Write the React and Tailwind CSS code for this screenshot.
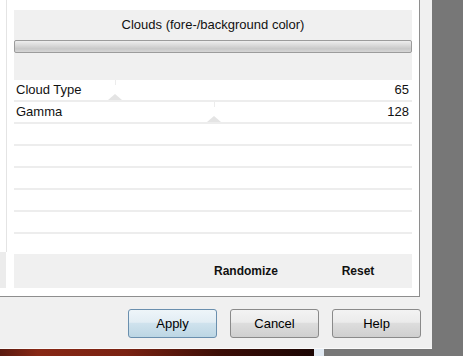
import React from "react"

const params = [
  { label: "Cloud Type", value: 65 },
  { label: "Gamma", value: 128 },
]

const font = { fontFamily: '"Liberation Sans", Arial, sans-serif' }

const ParamRow = ({ label, value }) => {
  const pct = (value / 255) * 100
  return (
    <div className="relative h-[22px] border-b-2 border-[#ededed] flex items-center justify-between pl-[2px] pr-[3px] text-[13px] text-[#111]">
      <span>{label}</span>
      <span>{value}</span>
      {/* slider marker */}
      <div className="absolute top-0 w-px h-[5px] bg-[#ececec]" style={{ left: `${pct}%` }} />
      <div
        className="absolute bottom-0 w-0 h-0 border-l-[7px] border-r-[7px] border-b-[6px] border-l-transparent border-r-transparent border-b-[#e4e4e4] -translate-x-1/2"
        style={{ left: `${pct}%` }}
      />
    </div>
  )
}

const Button = ({ children, primary }) => (
  <button
    className={`w-[89px] h-[29px] rounded-[3px] border text-[13px] text-black ${
      primary
        ? "border-[#6a8fae] bg-[linear-gradient(to_bottom,#eef5f9_0%,#e2edf4_45%,#cfe2ed_50%,#bcd6e4_100%)]"
        : "border-[#8a8a8a] bg-[linear-gradient(to_bottom,#f3f3f3_0%,#ebebeb_45%,#dddddd_50%,#cfcfcf_100%)]"
    }`}
  >
    {children}
  </button>
)

export default function App() {
  return (
    <div className="w-[463px] h-[356px] flex flex-col overflow-hidden bg-[#777777]" style={font}>
      <div className="flex h-[349px]">
        {/* Dialog */}
        <div className="w-[432px] bg-[#f0f0f0] flex flex-col border-b border-[#fafafa]">
          <div className="flex h-[297px]">
            <div className="w-[420px] bg-white flex border-r border-b border-[#8e8e8e]">
              {/* left strip */}
              <div className="w-[7px] flex flex-col">
                <div className="flex-1 border-r border-[#e4e4e4]" />
                <div className="h-[36px] bg-[#ececec] border-r border-white" />
                <div className="h-[8px]" />
              </div>
              <div className="flex-1 pl-[7px] pr-[7px] pt-[10px] pb-[8px] flex flex-col">
                {/* header */}
                <div className="bg-[#f0f0f0] h-[70px] flex flex-col">
                  <div className="h-[30px] flex items-center justify-center text-[13px] text-[#111]">
                    Clouds (fore-/background color)
                  </div>
                  <div className="h-[13px] rounded-[2px] border border-[#9c9c9c] bg-[linear-gradient(to_bottom,#eeeeee_0%,#dcdcdc_35%,#c9c9c9_70%,#d6d6d6_100%)]" />
                </div>
                {/* parameters */}
                <div className="flex-1 flex flex-col overflow-hidden">
                  {params.map((p) => (
                    <ParamRow key={p.label} label={p.label} value={p.value} />
                  ))}
                  {[0, 1, 2, 3, 4].map((i) => (
                    <div key={i} className="h-[22px] shrink-0 border-b-2 border-[#ededed]" />
                  ))}
                </div>
                {/* bottom bar */}
                <div className="h-[34px] bg-[#f0f0f0] flex items-center justify-end gap-[12px] pr-[4px] text-[12px] font-bold text-[#111]">
                  <span className="w-[100px] text-center">Randomize</span>
                  <span className="w-[100px] text-center">Reset</span>
                </div>
              </div>
            </div>
            <div className="flex-1" />
          </div>
          {/* buttons */}
          <div className="flex-1 flex items-start justify-end gap-[13px] pt-[12px] pr-[11px]">
            <Button primary>Apply</Button>
            <Button>Cancel</Button>
            <Button>Help</Button>
          </div>
        </div>
        <div className="flex-1 bg-[#777777]" />
      </div>
      {/* taskbar strip */}
      <div className="flex-1 flex">
        <div className="w-[314px] bg-[linear-gradient(to_right,#5a1a10_0%,#872815_12%,#7a2212_40%,#3c0e07_70%,#1c0604_100%)]" />
        <div className="w-[10px] bg-[#dfe8f1]" />
        <div className="flex-1 bg-[#777777]" />
      </div>
    </div>
  )
}
